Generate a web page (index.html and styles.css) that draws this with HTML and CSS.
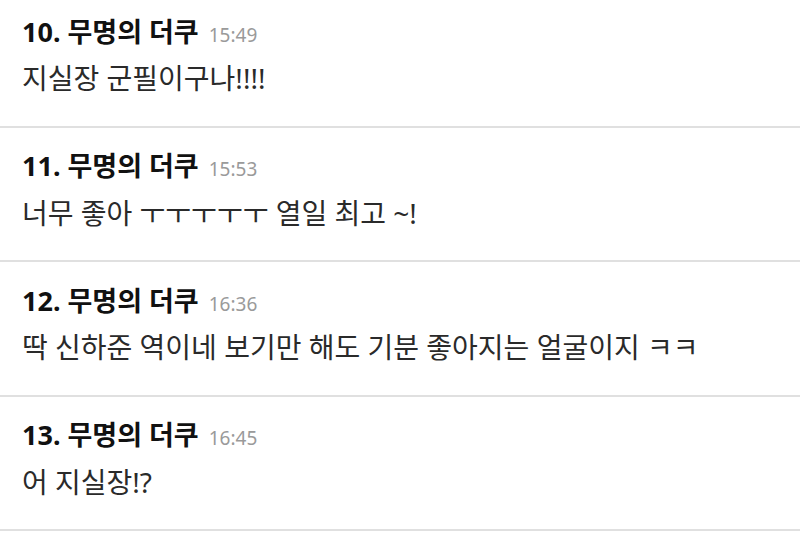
FILE: index.html
```html
<!DOCTYPE html>
<html lang="ko">
<head>
    <meta charset="utf-8">
    <title>댓글</title>
    <link rel="stylesheet" href="styles.css">
</head>
<body>
    <ul class="comments">
        <li class="comment">
            <div class="comment__head">
                <span class="comment__name">10. 무명의 더쿠</span>
                <span class="comment__time">15:49</span>
            </div>
            <p class="comment__text">지실장 군필이구나!!!!</p>
        </li>
        <li class="comment">
            <div class="comment__head">
                <span class="comment__name">11. 무명의 더쿠</span>
                <span class="comment__time">15:53</span>
            </div>
            <p class="comment__text">너무 좋아 ㅜㅜㅜㅜㅜ 열일 최고 ~!</p>
        </li>
        <li class="comment">
            <div class="comment__head">
                <span class="comment__name">12. 무명의 더쿠</span>
                <span class="comment__time">16:36</span>
            </div>
            <p class="comment__text">딱 신하준 역이네 보기만 해도 기분 좋아지는 얼굴이지 ㅋㅋ</p>
        </li>
        <li class="comment">
            <div class="comment__head">
                <span class="comment__name">13. 무명의 더쿠</span>
                <span class="comment__time">16:45</span>
            </div>
            <p class="comment__text">어 지실장!?</p>
        </li>
    </ul>
</body>
</html>
```

FILE: styles.css
```css
body{
    margin: 0;
    background: #fff;
    font-family: "Noto Sans", "Noto Sans CJK KR", sans-serif;
    overflow: hidden;
}
.comments{
    list-style: none;
    margin: -7px 0 0 0;
    padding: 0;
}
.comment{
    padding: 21.5px 22px 27.5px;
    border-bottom: 2px solid #e0e0e0;
}
.comment__head{
    display: flex;
    align-items: baseline;
    height: 34px;
    line-height: 34px;
}
.comment__name{
    font-size: 27px;
    font-weight: bold;
    color: #111;
}
.comment__time{
    font-size: 19px;
    line-height: 19px;
    color: #9a9a9a;
    margin-left: 10px;
}
.comment__text{
    margin: 9.5px 0 0;
    font-size: 28px;
    line-height: 40px;
    color: #2a2a2a;
}
```
